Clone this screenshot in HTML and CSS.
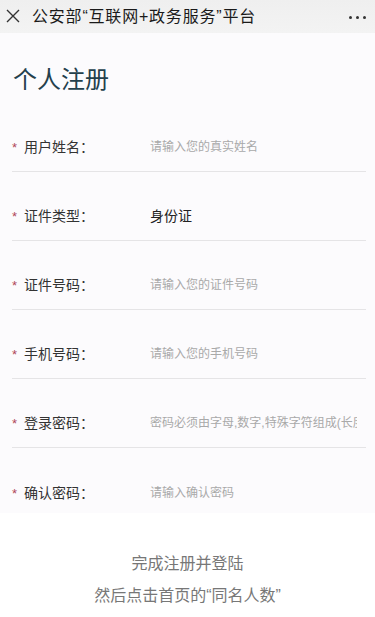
FILE: index.html
```html
<!DOCTYPE html>
<html lang="zh-CN">
<head>
  <meta charset="UTF-8" />
  <meta name="viewport" content="width=device-width, initial-scale=1.0"/>
  <title>个人注册</title>
  <link rel="stylesheet" href="styles.css">
</head>
<body>

  <!-- Top bar -->
  <div class="topbar">
    <svg class="close-icon" width="14" height="14" viewBox="0 0 14 14">
      <path d="M1 1 L13 13 M13 1 L1 13" stroke="#333" stroke-width="1.4" fill="none"/>
    </svg>
    <div class="topbar-title">公安部“互联网+政务服务”平台</div>
    <div class="more"><span></span><span></span><span></span></div>
  </div>

  <div class="page">
    <h1 class="page-title">个人注册</h1>

    <div class="form">
      <div class="row">
        <label class="label"><span class="star">*</span>用户姓名：</label>
        <div class="value placeholder">请输入您的真实姓名</div>
      </div>
      <div class="row">
        <label class="label"><span class="star">*</span>证件类型：</label>
        <div class="value">身份证</div>
      </div>
      <div class="row">
        <label class="label"><span class="star">*</span>证件号码：</label>
        <div class="value placeholder">请输入您的证件号码</div>
      </div>
      <div class="row">
        <label class="label"><span class="star">*</span>手机号码：</label>
        <div class="value placeholder">请输入您的手机号码</div>
      </div>
      <div class="row">
        <label class="label"><span class="star">*</span>登录密码：</label>
        <div class="value placeholder">密码必须由字母,数字,特殊字符组成(长度不少于8位)</div>
      </div>
      <div class="row last">
        <label class="label"><span class="star">*</span>确认密码：</label>
        <div class="value placeholder">请输入确认密码</div>
      </div>
    </div>
  </div>

  <div class="note">
    <p>完成注册并登陆</p>
    <p>然后点击首页的“同名人数”</p>
  </div>

</body>
</html>
```

FILE: styles.css
```css
body {
  margin: 0;
  font-family: "Liberation Sans", "Noto Sans CJK SC", sans-serif;
  background-color: #fff;
  color: #333;
}

.topbar {
  height: 33px;
  background: linear-gradient(#efefef, #f3f3f3);
  display: flex;
  align-items: center;
  padding: 0 8px 0 6px;
}

.close-icon {
  flex: none;
  margin-top: -2px;
}

.topbar-title {
  flex: 1;
  margin-left: 12px;
  font-size: 16px;
  letter-spacing: 0.8px;
  color: #1a1a1a;
  margin-top: -3px;
}

.more {
  display: flex;
  gap: 4px;
  margin-right: 1px;
  margin-top: 1px;
}

.more span {
  width: 3px;
  height: 3px;
  border-radius: 50%;
  background-color: #333;
}

.page {
  background-color: #fcfbfd;
}

.page-title {
  margin: 0;
  padding: 32px 0 8px 13px;
  font-size: 24px;
  line-height: 30px;
  font-weight: normal;
  color: #24404c;
}

.form {
  padding: 0 9px 0 12px;
}

.row {
  display: flex;
  align-items: center;
  padding: 34px 0 14px;
  height: 20px;
  line-height: 20px;
  border-bottom: 1px solid #e5e4e6;
}

.row.last {
  border-bottom: none;
  padding-top: 35px;
  padding-bottom: 10px;
}

.label {
  width: 138px;
  flex: none;
  font-size: 14px;
  color: #333;
}

.star {
  color: #b0475a;
  font-size: 13px;
  margin-right: 7px;
}

.value {
  flex: 1;
  font-size: 14px;
  color: #222;
  white-space: nowrap;
  overflow: hidden;
  margin-right: 9px;
}

.value.placeholder {
  font-size: 12px;
  color: #a9a9a9;
}

.note {
  padding-top: 35px;
  text-align: center;
  font-size: 16px;
  color: #777;
}

.note p {
  margin: 0;
  line-height: 32px;
}
```
